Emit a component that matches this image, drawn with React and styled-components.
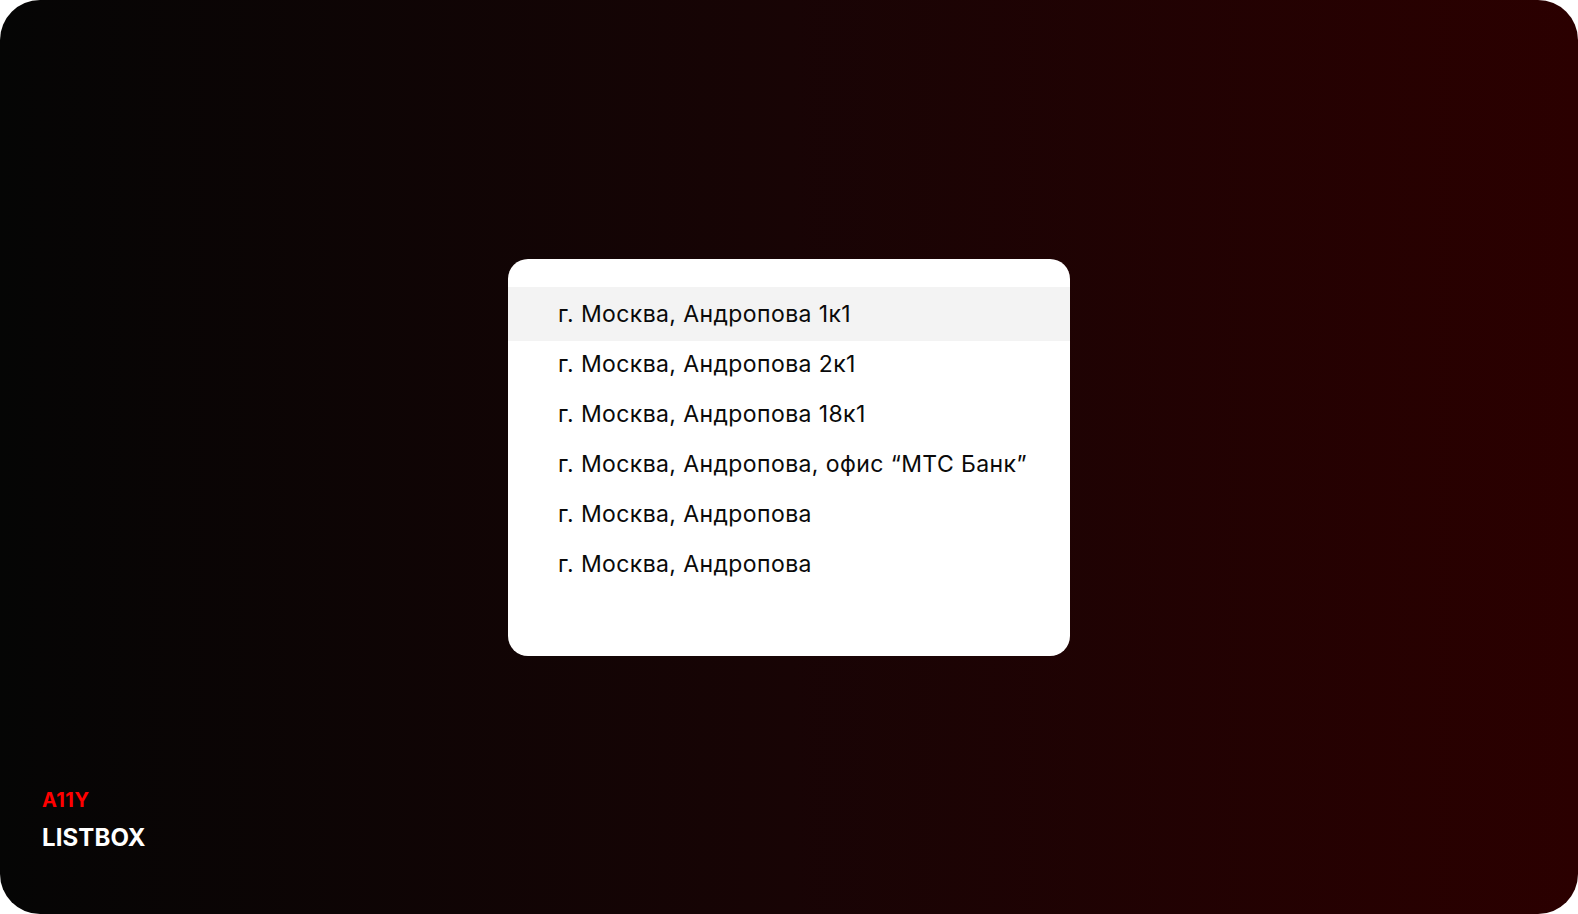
import styled, { createGlobalStyle } from 'styled-components';

const GlobalStyle = createGlobalStyle`
  html, body {
    margin: 0;
    padding: 0;
    background: #ffffff;
  }
  * {
    box-sizing: border-box;
  }
`;

const Frame = styled.div`
  width: 1578px;
  height: 914px;
  border-radius: 40px;
  overflow: hidden;
  background: linear-gradient(90deg, #050505 0%, #180405 50%, #2b0000 100%);
  display: grid;
  grid-template-rows: 1fr auto 1fr;
  justify-items: center;
  font-family: Inter, "Noto Sans", sans-serif;
`;

const Listbox = styled.ul`
  grid-row: 2;
  width: 562px;
  height: 397px;
  margin: 0;
  padding: 30px 0 0;
  list-style: none;
  background: #ffffff;
  border-radius: 20px;
  overflow: hidden;
`;

const Option = styled.li`
  height: ${p => (p.$active ? '54px' : '50px')};
  margin: ${p => (p.$active ? '-2px 0' : '0')};
  padding-left: 50px;
  display: flex;
  align-items: center;
  font-size: 23px;
  color: #0a0a0a;
  letter-spacing: 0.4px;
  background: ${p => (p.$active ? '#f3f3f3' : 'transparent')};
`;

const Caption = styled.div`
  grid-row: 3;
  justify-self: start;
  align-self: end;
  padding: 0 0 62px 42px;
  display: flex;
  flex-direction: column;
  gap: 12px;
  font-weight: 700;
`;

const Kicker = styled.span`
  font-size: 20px;
  line-height: 24px;
  letter-spacing: 0.4px;
  color: #ff0000;
`;

const Heading = styled.span`
  font-size: 24px;
  line-height: 28px;
  letter-spacing: 0.1px;
  color: #ffffff;
`;

const options = [
  'г. Москва, Андропова 1к1',
  'г. Москва, Андропова 2к1',
  'г. Москва, Андропова 18к1',
  'г. Москва, Андропова, офис “МТС Банк”',
  'г. Москва, Андропова',
  'г. Москва, Андропова',
];

const App = () => (
  <>
    <GlobalStyle />
    <Frame>
      <Listbox role="listbox">
        {options.map((text, index) => (
          <Option key={index} role="option" $active={index === 0} aria-selected={index === 0}>
            {text}
          </Option>
        ))}
      </Listbox>
      <Caption>
        <Kicker>A11Y</Kicker>
        <Heading>LISTBOX</Heading>
      </Caption>
    </Frame>
  </>
);

export default App;
